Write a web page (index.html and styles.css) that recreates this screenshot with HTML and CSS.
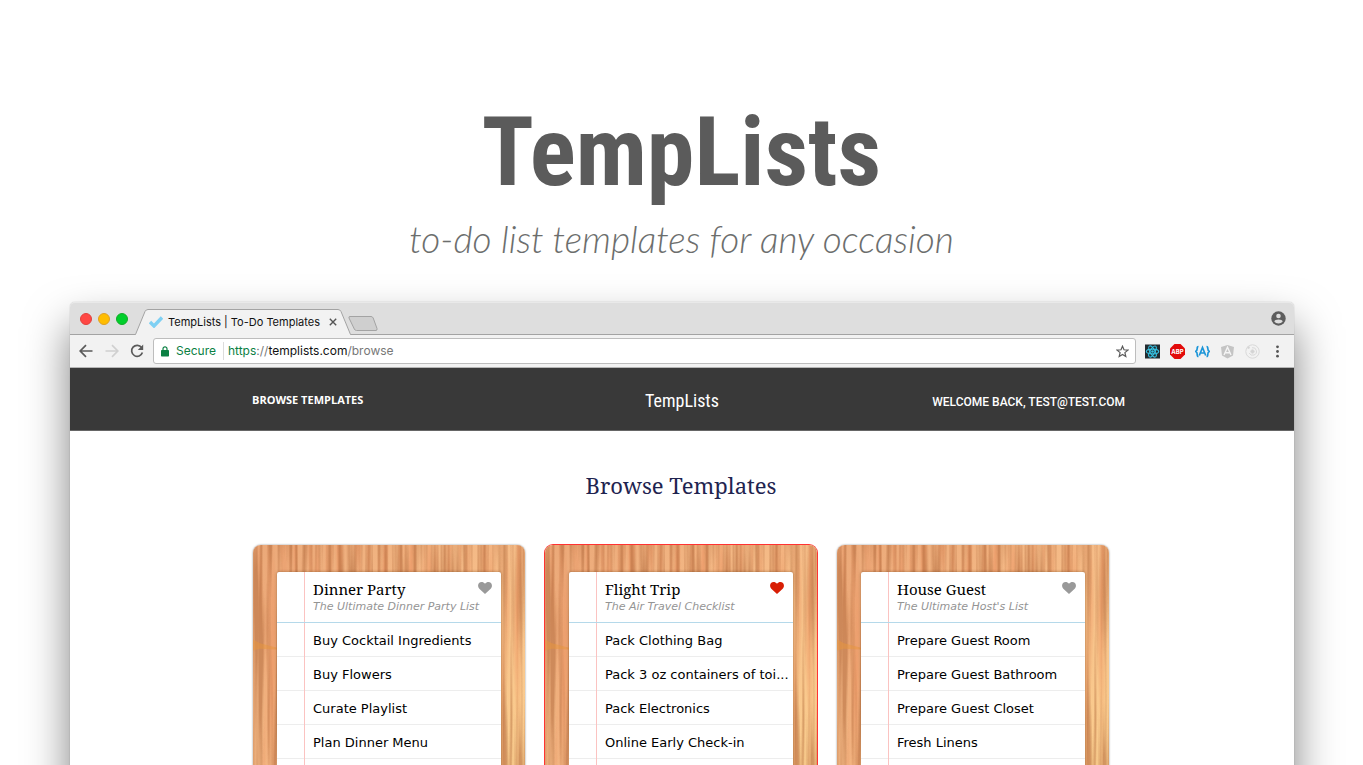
FILE: index.html
```html
<!DOCTYPE html>
<html lang="en">
<head>
<meta charset="utf-8">
<meta name="viewport" content="width=device-width, initial-scale=1">
<title>TempLists</title>
<link rel="stylesheet" href="styles.css">
</head>
<body>
<svg class="defs" width="0" height="0" aria-hidden="true">
  <defs>
    <linearGradient id="wood-base" x1="0" y1="0" x2="1" y2="1">
      <stop offset="0" stop-color="#eba878"/>
      <stop offset=".45" stop-color="#f5bb87"/>
      <stop offset="1" stop-color="#fdd592"/>
    </linearGradient>
    <filter id="grain" x="0" y="0" width="100%" height="100%" color-interpolation-filters="sRGB">
      <feTurbulence type="fractalNoise" baseFrequency="0.2 0.005" numOctaves="2" seed="8"/>
      <feColorMatrix values="0 0 0 0 .70  0 0 0 0 .42  0 0 0 0 .24  3.6 0 0 0 -1.45"/>
    </filter>
    <filter id="streak" x="0" y="0" width="100%" height="100%" color-interpolation-filters="sRGB">
      <feTurbulence type="fractalNoise" baseFrequency="0.11 0.004" numOctaves="2" seed="21"/>
      <feColorMatrix values="0 0 0 0 .90  0 0 0 0 .47  0 0 0 0 .28  0 3 0 0 -1.35"/>
    </filter>
    <symbol id="heart" viewBox="0 0 14 12">
      <path d="M7 12 1.3 6.7C-.3 5.100-.3 2.500 1 1.100 2.600-.4 5.300-.3 7 1.700 8.700-.3 11.400-.4 13 1.100c1.300 1.400 1.300 4-.3 5.600Z"/>
    </symbol>
    <symbol id="wood" viewBox="0 0 272 320" preserveAspectRatio="none">
      <rect width="272" height="320" fill="url(#wood-base)"/>
      <rect width="272" height="320" filter="url(#streak)" opacity=".4"/>
      <rect width="272" height="320" filter="url(#grain)" opacity=".55"/>
      <path d="M0 104l7 4 17 5v2l-17-1-7 2z" fill="#e8963c" opacity=".5"/>
    </symbol>
  </defs>
</svg>

<header class="hero">
  <h1 class="hero-title">TempLists</h1>
  <p class="hero-tagline">to-do list templates for any occasion</p>
</header>

<section class="window">
  <div class="titlebar">
    <div class="lights"><i class="light red"></i><i class="light yellow"></i><i class="light green"></i></div>
    <div class="tab">
      <svg class="tab-shape" viewBox="0 0 218 26" preserveAspectRatio="none" aria-hidden="true"><path d="M0 25.500h1.500L11 2.500Q12 .5 14 .5H204Q206 .5 207 2.500L216.500 25.500H218V26H0z" fill="#f2f2f2"/><path d="M0 25.500h1.500L11 2.500Q12 .5 14 .5H204Q206 .5 207 2.500L216.500 25.500H218" fill="none" stroke="#a3a3a3"/></svg>
      <svg class="tab-check" width="14" height="12" viewBox="0 0 14 12" aria-hidden="true"><path d="m1 6 4 4L13 1.500" fill="none" stroke="#7fd0f3" stroke-width="3.400"/></svg>
      <span class="tab-title">TempLists | To-Do Templates</span>
      <button class="plain tab-close" aria-label="Close tab"><svg width="8" height="8" viewBox="0 0 8 8"><path d="m.8.8 6.400 6.400M7.200.8.8 7.200" stroke="#555" stroke-width="1.400"/></svg></button>
    </div>
    <button class="plain new-tab" aria-label="New tab"><svg width="30" height="15" viewBox="0 0 30 15"><path d="M2 .5h21q1.500 0 2.200 1.500L29 12.500q.4 2-1 2H8.500q-1.500 0-2.200-1.500L1 2Q.5.5 2 .5Z" fill="#cfcfcf" stroke="#a3a3a3"/></svg></button>
    <button class="plain profile" aria-label="Profile"><svg width="15" height="15" viewBox="0 0 15 15"><circle cx="7.500" cy="7.500" r="7.200" fill="#5d5d5d"/><circle cx="7.500" cy="5" r="2.300" fill="#ddd"/><path d="M3.300 10.600c0-2.900 8.400-2.900 8.400 0-1.800 2.600-6.600 2.600-8.400 0Z" fill="#ddd"/></svg></button>
  </div>

  <div class="toolbar">
    <button class="plain" aria-label="Back"><svg width="14" height="14" viewBox="0 0 14 14" fill="none" stroke="#5a5a5a" stroke-width="1.700"><path d="M13.500 7H1.500M7 1.200 1.200 7 7 12.800"/></svg></button>
    <button class="plain forward" aria-label="Forward" disabled><svg width="14" height="14" viewBox="0 0 14 14" fill="none" stroke="#d0d0d0" stroke-width="1.700"><path d="M.5 7h12M7 1.200 12.800 7 7 12.800"/></svg></button>
    <button class="plain reload" aria-label="Reload"><svg width="14" height="14" viewBox="0 0 14 14"><path d="M11.600 3.600A5.500 5.500 0 1 0 12.400 8.500" fill="none" stroke="#5a5a5a" stroke-width="1.700"/><path d="M13.200.6V6H7.800Z" fill="#5a5a5a"/></svg></button>
    <div class="address">
      <svg width="8" height="11" viewBox="0 0 8 11" aria-hidden="true"><rect y="4" width="8" height="6.500" rx=".7" fill="#0b8043"/><path d="M2 4.500V2.800a2 2 0 0 1 4 0v1.700" fill="none" stroke="#0b8043" stroke-width="1.200"/></svg>
      <span class="secure">Secure</span>
      <a class="url" href="#"><span class="scheme">https</span>://<span class="host">templists.com</span>/browse</a>
      <button class="plain star" aria-label="Bookmark"><svg width="13" height="13" viewBox="0 0 13 13"><path d="m6.500 1.200 1.500 3.600 3.900.3-3 2.500.9 3.800-3.300-2-3.300 2 .9-3.800-3-2.500 3.900-.3Z" fill="none" stroke="#5a5a5a" stroke-width="1.200"/></svg></button>
    </div>
    <div class="extensions">
      <button class="plain" aria-label="React tools"><svg width="15" height="15" viewBox="0 0 15 15"><path d="M0 .5h15v14H0z" fill="#222b30"/><g fill="none" stroke="#35c0e0" stroke-width="1.100"><ellipse cx="7.500" cy="7.500" rx="6.200" ry="2.400"/><ellipse cx="7.500" cy="7.500" rx="6.200" ry="2.400" transform="rotate(60 7.500 7.500)"/><ellipse cx="7.500" cy="7.500" rx="6.200" ry="2.400" transform="rotate(120 7.500 7.500)"/></g><circle cx="7.500" cy="7.500" r="1.300" fill="#35c0e0"/></svg></button>
      <button class="plain abp" aria-label="Ad blocker"><svg width="15" height="15" viewBox="0 0 15 15" aria-hidden="true"><path d="M4.500 0h6L15 4.500v6L10.500 15h-6L0 10.500v-6Z" fill="#e20a0a"/></svg><span class="abp-text">ABP</span></button>
      <button class="plain" aria-label="Angular inspector"><svg width="15" height="15" viewBox="0 0 15 15" fill="none" stroke="#1b95d8" stroke-width="1.700"><path d="M3.500 2.500Q2.200 2.500 2.200 4.500T.7 7.500Q2.200 8 2.200 10.300T3.500 12.500M11.500 2.500q1.300 0 1.300 2t1.500 3q-1.500.5-1.500 2.800t-1.300 2.200M4.300 11.500 7.500 3.500l3.200 8M5.500 9h4"/></svg></button>
      <button class="plain" aria-label="Angular tools"><svg width="15" height="15" viewBox="0 0 15 15"><path d="M7.500 1 14 3l-1 8.500-5.500 3-5.500-3L1 3Z" fill="#c4c4c4"/><path d="M4 11 7.500 3.200 11 11M5.500 8.800h4" fill="none" stroke="#f5f5f5" stroke-width="1.400"/></svg></button>
      <button class="plain" aria-label="Orbit tools"><svg width="15" height="15" viewBox="0 0 15 15" fill="none" stroke="#d9d9d9"><circle cx="7.500" cy="7.500" r="6.700"/><path d="M4.200 9A3.800 3.800 0 1 0 7 3.700"/><circle cx="7.500" cy="7.500" r="1.700" fill="#d4d4d4"/><circle cx="3.500" cy="3.500" r="1" fill="#d4d4d4"/></svg></button>
      <button class="plain" aria-label="Menu"><svg width="15" height="15" viewBox="0 0 15 15" fill="#555"><circle cx="7.500" cy="2.800" r="1.400"/><circle cx="7.500" cy="7.500" r="1.400"/><circle cx="7.500" cy="12.200" r="1.400"/></svg></button>
    </div>
  </div>

  <nav class="site-nav">
    <a class="nav-link browse" href="#">BROWSE TEMPLATES</a>
    <a class="brand" href="#">TempLists</a>
    <a class="nav-link user" href="#">WELCOME BACK, TEST@TEST.COM</a>
  </nav>

  <main class="page">
    <h2 class="page-title">Browse Templates</h2>
    <div class="cards">
      <article class="card">
        <svg class="wood" aria-hidden="true"><use href="#wood"/></svg>
        <div class="paper">
          <header class="paper-head">
            <h3 class="list-title">Dinner Party</h3>
            <p class="list-sub">The Ultimate Dinner Party List</p>
            <button class="plain like" aria-label="Like Dinner Party"><svg width="14" height="12"><use href="#heart"/></svg></button>
          </header>
          <ul class="items"><li>Buy Cocktail Ingredients</li><li>Buy Flowers</li><li>Curate Playlist</li><li>Plan Dinner Menu</li></ul>
        </div>
      </article>
      <article class="card selected">
        <svg class="wood" aria-hidden="true"><use href="#wood"/></svg>
        <div class="paper">
          <header class="paper-head">
            <h3 class="list-title">Flight Trip</h3>
            <p class="list-sub">The Air Travel Checklist</p>
            <button class="plain like liked" aria-label="Unlike Flight Trip"><svg width="14" height="12"><use href="#heart"/></svg></button>
          </header>
          <ul class="items"><li>Pack Clothing Bag</li><li>Pack 3 oz containers of toi...</li><li>Pack Electronics</li><li>Online Early Check-in</li></ul>
        </div>
      </article>
      <article class="card">
        <svg class="wood" aria-hidden="true"><use href="#wood"/></svg>
        <div class="paper">
          <header class="paper-head">
            <h3 class="list-title">House Guest</h3>
            <p class="list-sub">The Ultimate Host's List</p>
            <button class="plain like" aria-label="Like House Guest"><svg width="14" height="12"><use href="#heart"/></svg></button>
          </header>
          <ul class="items"><li>Prepare Guest Room</li><li>Prepare Guest Bathroom</li><li>Prepare Guest Closet</li><li>Fresh Linens</li></ul>
        </div>
      </article>
    </div>
  </main>
</section>
</body>
</html>
```
FILE: styles.css
```css
* { box-sizing: border-box; }
body {
  margin: 0;
  height: 100vh;
  overflow: hidden;
  background: #fff;
  font-family: "DejaVu Sans", sans-serif;
  display: flex;
  flex-direction: column;
}
h1, h2, h3, p, ul { margin: 0; padding: 0; font-weight: 400; }
ul { list-style: none; }
a { color: inherit; text-decoration: none; }
svg { display: block; }
.defs { position: absolute; }
.plain { border: 0; padding: 0; background: none; display: block; flex: none; }

.hero { padding: 88px 20px 40px; text-align: center; }
.hero-title {
  font: 700 96px/128px "Roboto Condensed", "Liberation Sans Narrow", "DejaVu Sans Condensed", sans-serif;
  color: #5b5b5b;
}
.hero-tagline { font: italic 300 37px/46px Lato, sans-serif; color: #6c6e6d; }

.window {
  flex: 1 0 auto;
  margin: 0 69px 0 70px;
  border-radius: 5px 5px 0 0;
  background: #fff;
  box-shadow: 0 24px 44px rgba(0, 0, 0, .5), 0 0 1px rgba(0, 0, 0, .4);
}
.titlebar {
  display: flex;
  align-items: flex-end;
  height: 33px;
  background: #dedede;
  border-top: 1px solid #e9e9e9;
  border-bottom: 1px solid #a3a3a3;
  border-radius: 5px 5px 0 0;
}
.lights { display: flex; gap: 6px; padding: 0 6px 9px 10px; }
.light { width: 12px; height: 12px; border-radius: 50%; border: 1px solid; }
.red { background: #ff4744; border-color: #e2403c; }
.yellow { background: #ffbd00; border-color: #dfa023; }
.green { background: #00cf2b; border-color: #12ac28; }
.tab {
  position: relative;
  display: flex;
  align-items: center;
  width: 218px;
  height: 26px;
  margin-bottom: -1px;
  padding: 0 15px 0 15px;
}
.tab-shape { position: absolute; inset: 0; width: 100%; height: 100%; }
.tab-check, .tab-title, .tab-close { position: relative; }
.tab-title { margin-left: 5px; font: 400 11px/16px Inter, sans-serif; color: #111; white-space: nowrap; }
.tab-close { margin-left: auto; }
.new-tab { margin: 0 0 3px -4px; }
.profile { margin: 0 8px 8px auto; }

.toolbar {
  display: flex;
  align-items: center;
  height: 33px;
  padding: 0 9px 0 9px;
  background: #f2f2f2;
  border-bottom: 1px solid #b5b5b5;
}
.forward { margin-left: 12px; }
.reload { margin-left: 11px; }
.address {
  flex: 1;
  display: flex;
  align-items: center;
  height: 26px;
  margin: 0 9px 0 9px;
  padding: 0 6px 0 7px;
  border: 1px solid #bdbdbd;
  border-radius: 3px;
  background: #fff;
  font: 400 12px/18px Inter, sans-serif;
}
.secure { margin-left: 7px; padding-right: 7px; border-right: 1px solid #dcdcdc; color: #0b8043; }
.url { margin-left: 4px; color: #777; }
.scheme { color: #0b8043; }
.host { color: #111; }
.star { margin-left: auto; }
.extensions { display: flex; gap: 10px; }
.abp { position: relative; }
.abp-text {
  position: absolute;
  inset: 0;
  font: 700 6px/15px Inter, sans-serif;
  color: #fff;
  text-align: center;
}

.site-nav {
  display: grid;
  grid-template-columns: 1fr auto 1fr;
  align-items: center;
  height: 63px;
  padding: 2px 169px 0;
  background: #393939;
  border-bottom: 1px solid #666;
  color: #fff;
}
.nav-link { font: 700 11px/16px "Open Sans", sans-serif; }
.browse { padding-left: 13px; }
.user { justify-self: end; padding-top: 4px; font: 500 12px/16px Roboto, sans-serif; }
.brand { padding-top: 2px; font: 400 18px/32px "Roboto Condensed", "Liberation Sans Narrow", sans-serif; }

.page { padding: 38px 2px 40px 0; }
.page-title {
  font: 400 22px/32px "Noto Serif", "Droid Serif", "DejaVu Serif Condensed", serif;
  color: #1f2450;
  text-align: center;
}
.cards {
  display: grid;
  grid-template-columns: repeat(3, 1fr);
  gap: 20px;
  width: 80%;
  max-width: 856px;
  margin: 44px auto 0;
}
.card {
  position: relative;
  padding: 27px 24px 24px;
  border-radius: 8px;
  box-shadow: 0 0 2px rgba(0, 0, 0, .5);
}
.selected { box-shadow: 0 0 0 1px #f33; }
.wood { position: absolute; inset: 0; width: 100%; height: 100%; border-radius: 8px; overflow: hidden; }
.paper {
  position: relative;
  min-height: 240px;
  border-radius: 2px;
  background: #fff;
  box-shadow: 0 0 3px rgba(90, 40, 0, .5);
}
.paper::before {
  content: "";
  position: absolute;
  top: 0;
  bottom: 0;
  left: 27px;
  border-left: 1px solid #fbc3c1;
}
.paper-head { position: relative; height: 51px; padding: 8px 8px 0 36px; border-bottom: 1px solid #b5d9ea; }
.list-title { font: 400 15px/19px "Noto Serif", "Droid Serif", "DejaVu Serif Condensed", serif; color: #000; }
.list-sub { font: italic 400 11px/16px "DejaVu Sans", sans-serif; color: #949494; white-space: nowrap; }
.like { position: absolute; top: 10px; right: 9px; fill: #999; }
.liked { fill: #d81e05; }
.items li {
  height: 34px;
  padding-left: 36px;
  border-bottom: 1px solid rgba(0, 0, 0, .07);
  font-size: 13px;
  line-height: 35px;
  white-space: nowrap;
  color: #000;
}
```
